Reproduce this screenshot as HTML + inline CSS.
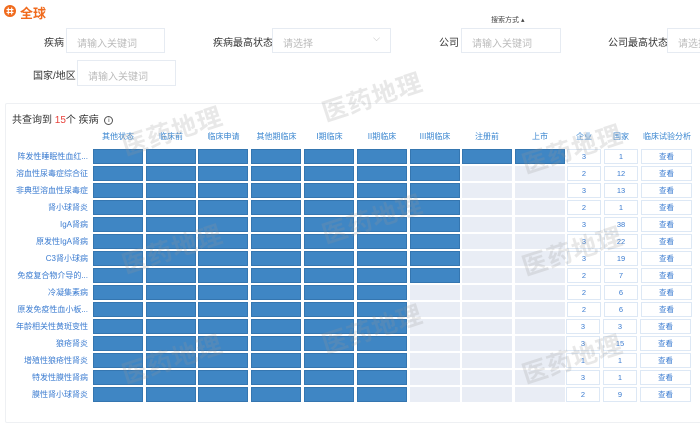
<!DOCTYPE html>
<html><head><meta charset="utf-8"><style>
*{margin:0;padding:0;box-sizing:border-box}
body{width:700px;height:414px;overflow:hidden;background:#fff;font-family:"Liberation Sans","Noto Sans CJK SC",sans-serif;position:relative;color:#333}
.a{position:absolute;white-space:nowrap}
.lbl{font-size:10px;color:#333}
.inp{position:absolute;border:1px solid #e6ebf2;height:25px;font-size:10px;color:#bbb;padding:6px 0 0 10px;background:#fff;white-space:nowrap;overflow:hidden}
.panel{position:absolute;left:5px;top:103px;width:700px;height:320px;border:1px solid #eef0f3;border-radius:2px}
.hd{position:absolute;top:131px;font-size:8px;color:#3a86d0;text-align:center}
.row{position:absolute;left:0;height:15px;width:700px}
.nm{position:absolute;left:0;width:88px;text-align:right;font-size:8px;color:#3a7bd0;line-height:15px;white-space:nowrap;overflow:hidden}
.c{position:absolute;top:0;height:15px;width:50px;background:#e9edf5}
.f{background:#3f86c4;border:1px solid #3576b0}
.n{position:absolute;top:0;height:15px;border:1px solid #dde8f5;background:#fff;font-size:7.5px;color:#3a7bd0;text-align:center;line-height:13px}
.wm{position:absolute;font-size:25px;font-weight:bold;color:rgba(150,150,150,.22);transform:rotate(-18deg);white-space:nowrap;letter-spacing:1px}
</style></head><body>
<div class="a" style="left:4px;top:5px;width:12px;height:12px;border-radius:50%;background:#f06a1c"></div>
<svg class="a" style="left:4px;top:5px" width="12" height="12" viewBox="0 0 12 12"><path d="M4.3 2.5V9.5M7.7 2.5V9.5M2.5 4.6H9.5M2.5 7.4H9.5" stroke="#fff" stroke-width="1.1" fill="none"/></svg>
<div class="a" style="left:20px;top:3px;font-size:13px;font-weight:bold;color:#f06a1c">全球</div>
<div class="a" style="left:491px;top:15px;font-size:7px;color:#444">搜索方式 ▴</div>

<div class="a lbl" style="left:44px;top:34px">疾病</div>
<div class="inp" style="left:66px;top:28px;width:99px">请输入关键词</div>
<div class="a lbl" style="left:213px;top:34px">疾病最高状态</div>
<div class="inp" style="left:272px;top:28px;width:119px">请选择<span style="position:absolute;right:10px;top:4px;color:#bbb;font-size:9px">⌵</span></div>
<div class="a lbl" style="left:439px;top:34px">公司</div>
<div class="inp" style="left:461px;top:28px;width:100px">请输入关键词</div>
<div class="a lbl" style="left:608px;top:34px">公司最高状态</div>
<div class="inp" style="left:667px;top:28px;width:40px">请选择</div>
<div class="a lbl" style="left:33px;top:67px">国家/地区</div>
<div class="inp" style="left:77px;top:60px;width:99px;height:26px;padding-top:7px">请输入关键词</div>

<div class="panel"></div>
<div class="a" style="left:12px;top:111px;font-size:10px;color:#333">共查询到 <span style="color:#e8413a">15</span>个 疾病 <span style="display:inline-block;width:9px;height:9px;border:1px solid #555;border-radius:50%;font-size:6px;text-align:center;line-height:8px;vertical-align:1px;margin-left:3px">i</span></div>

<div class="hd" style="left:93px;width:50px">其他状态</div>
<div class="hd" style="left:146px;width:50px">临床前</div>
<div class="hd" style="left:198px;width:51px">临床申请</div>
<div class="hd" style="left:251px;width:51px">其他期临床</div>
<div class="hd" style="left:304px;width:51px">I期临床</div>
<div class="hd" style="left:357px;width:50px">II期临床</div>
<div class="hd" style="left:410px;width:50px">III期临床</div>
<div class="hd" style="left:462px;width:50px">注册前</div>
<div class="hd" style="left:515px;width:50px">上市</div>
<div class="hd" style="left:567px;width:34px">企业</div>
<div class="hd" style="left:604px;width:34px">国家</div>
<div class="hd" style="left:638px;width:58px">临床试验分析</div>

<div class="row" style="top:149px"><div class="nm">阵发性睡眠性血红...</div><div class="c f" style="left:93px"></div><div class="c f" style="left:146px"></div><div class="c f" style="left:198px"></div><div class="c f" style="left:251px"></div><div class="c f" style="left:304px"></div><div class="c f" style="left:357px"></div><div class="c f" style="left:410px"></div><div class="c f" style="left:462px"></div><div class="c f" style="left:515px"></div><div class="n" style="left:567px;width:34px">3</div><div class="n" style="left:604px;width:34px">1</div><div class="n" style="left:641px;width:51px">查看</div></div>
<div class="row" style="top:166px"><div class="nm">溶血性尿毒症综合征</div><div class="c f" style="left:93px"></div><div class="c f" style="left:146px"></div><div class="c f" style="left:198px"></div><div class="c f" style="left:251px"></div><div class="c f" style="left:304px"></div><div class="c f" style="left:357px"></div><div class="c f" style="left:410px"></div><div class="c" style="left:462px"></div><div class="c" style="left:515px"></div><div class="n" style="left:567px;width:34px">2</div><div class="n" style="left:604px;width:34px">12</div><div class="n" style="left:641px;width:51px">查看</div></div>
<div class="row" style="top:183px"><div class="nm">非典型溶血性尿毒症</div><div class="c f" style="left:93px"></div><div class="c f" style="left:146px"></div><div class="c f" style="left:198px"></div><div class="c f" style="left:251px"></div><div class="c f" style="left:304px"></div><div class="c f" style="left:357px"></div><div class="c f" style="left:410px"></div><div class="c" style="left:462px"></div><div class="c" style="left:515px"></div><div class="n" style="left:567px;width:34px">3</div><div class="n" style="left:604px;width:34px">13</div><div class="n" style="left:641px;width:51px">查看</div></div>
<div class="row" style="top:200px"><div class="nm">肾小球肾炎</div><div class="c f" style="left:93px"></div><div class="c f" style="left:146px"></div><div class="c f" style="left:198px"></div><div class="c f" style="left:251px"></div><div class="c f" style="left:304px"></div><div class="c f" style="left:357px"></div><div class="c f" style="left:410px"></div><div class="c" style="left:462px"></div><div class="c" style="left:515px"></div><div class="n" style="left:567px;width:34px">2</div><div class="n" style="left:604px;width:34px">1</div><div class="n" style="left:641px;width:51px">查看</div></div>
<div class="row" style="top:217px"><div class="nm">IgA肾病</div><div class="c f" style="left:93px"></div><div class="c f" style="left:146px"></div><div class="c f" style="left:198px"></div><div class="c f" style="left:251px"></div><div class="c f" style="left:304px"></div><div class="c f" style="left:357px"></div><div class="c f" style="left:410px"></div><div class="c" style="left:462px"></div><div class="c" style="left:515px"></div><div class="n" style="left:567px;width:34px">3</div><div class="n" style="left:604px;width:34px">38</div><div class="n" style="left:641px;width:51px">查看</div></div>
<div class="row" style="top:234px"><div class="nm">原发性IgA肾病</div><div class="c f" style="left:93px"></div><div class="c f" style="left:146px"></div><div class="c f" style="left:198px"></div><div class="c f" style="left:251px"></div><div class="c f" style="left:304px"></div><div class="c f" style="left:357px"></div><div class="c f" style="left:410px"></div><div class="c" style="left:462px"></div><div class="c" style="left:515px"></div><div class="n" style="left:567px;width:34px">3</div><div class="n" style="left:604px;width:34px">22</div><div class="n" style="left:641px;width:51px">查看</div></div>
<div class="row" style="top:251px"><div class="nm">C3肾小球病</div><div class="c f" style="left:93px"></div><div class="c f" style="left:146px"></div><div class="c f" style="left:198px"></div><div class="c f" style="left:251px"></div><div class="c f" style="left:304px"></div><div class="c f" style="left:357px"></div><div class="c f" style="left:410px"></div><div class="c" style="left:462px"></div><div class="c" style="left:515px"></div><div class="n" style="left:567px;width:34px">3</div><div class="n" style="left:604px;width:34px">19</div><div class="n" style="left:641px;width:51px">查看</div></div>
<div class="row" style="top:268px"><div class="nm">免疫复合物介导的...</div><div class="c f" style="left:93px"></div><div class="c f" style="left:146px"></div><div class="c f" style="left:198px"></div><div class="c f" style="left:251px"></div><div class="c f" style="left:304px"></div><div class="c f" style="left:357px"></div><div class="c f" style="left:410px"></div><div class="c" style="left:462px"></div><div class="c" style="left:515px"></div><div class="n" style="left:567px;width:34px">2</div><div class="n" style="left:604px;width:34px">7</div><div class="n" style="left:641px;width:51px">查看</div></div>
<div class="row" style="top:285px"><div class="nm">冷凝集素病</div><div class="c f" style="left:93px"></div><div class="c f" style="left:146px"></div><div class="c f" style="left:198px"></div><div class="c f" style="left:251px"></div><div class="c f" style="left:304px"></div><div class="c f" style="left:357px"></div><div class="c" style="left:410px"></div><div class="c" style="left:462px"></div><div class="c" style="left:515px"></div><div class="n" style="left:567px;width:34px">2</div><div class="n" style="left:604px;width:34px">6</div><div class="n" style="left:641px;width:51px">查看</div></div>
<div class="row" style="top:302px"><div class="nm">原发免疫性血小板...</div><div class="c f" style="left:93px"></div><div class="c f" style="left:146px"></div><div class="c f" style="left:198px"></div><div class="c f" style="left:251px"></div><div class="c f" style="left:304px"></div><div class="c f" style="left:357px"></div><div class="c" style="left:410px"></div><div class="c" style="left:462px"></div><div class="c" style="left:515px"></div><div class="n" style="left:567px;width:34px">2</div><div class="n" style="left:604px;width:34px">6</div><div class="n" style="left:641px;width:51px">查看</div></div>
<div class="row" style="top:319px"><div class="nm">年龄相关性黄斑变性</div><div class="c f" style="left:93px"></div><div class="c f" style="left:146px"></div><div class="c f" style="left:198px"></div><div class="c f" style="left:251px"></div><div class="c f" style="left:304px"></div><div class="c f" style="left:357px"></div><div class="c" style="left:410px"></div><div class="c" style="left:462px"></div><div class="c" style="left:515px"></div><div class="n" style="left:566px;width:34px">3</div><div class="n" style="left:603px;width:34px">3</div><div class="n" style="left:640px;width:51px">查看</div></div>
<div class="row" style="top:336px"><div class="nm">狼疮肾炎</div><div class="c f" style="left:93px"></div><div class="c f" style="left:146px"></div><div class="c f" style="left:198px"></div><div class="c f" style="left:251px"></div><div class="c f" style="left:304px"></div><div class="c f" style="left:357px"></div><div class="c" style="left:410px"></div><div class="c" style="left:462px"></div><div class="c" style="left:515px"></div><div class="n" style="left:566px;width:34px">3</div><div class="n" style="left:603px;width:34px">15</div><div class="n" style="left:640px;width:51px">查看</div></div>
<div class="row" style="top:353px"><div class="nm">增殖性狼疮性肾炎</div><div class="c f" style="left:93px"></div><div class="c f" style="left:146px"></div><div class="c f" style="left:198px"></div><div class="c f" style="left:251px"></div><div class="c f" style="left:304px"></div><div class="c f" style="left:357px"></div><div class="c" style="left:410px"></div><div class="c" style="left:462px"></div><div class="c" style="left:515px"></div><div class="n" style="left:566px;width:34px">1</div><div class="n" style="left:603px;width:34px">1</div><div class="n" style="left:640px;width:51px">查看</div></div>
<div class="row" style="top:370px"><div class="nm">特发性膜性肾病</div><div class="c f" style="left:93px"></div><div class="c f" style="left:146px"></div><div class="c f" style="left:198px"></div><div class="c f" style="left:251px"></div><div class="c f" style="left:304px"></div><div class="c f" style="left:357px"></div><div class="c" style="left:410px"></div><div class="c" style="left:462px"></div><div class="c" style="left:515px"></div><div class="n" style="left:566px;width:34px">3</div><div class="n" style="left:603px;width:34px">1</div><div class="n" style="left:640px;width:51px">查看</div></div>
<div class="row" style="top:387px"><div class="nm">膜性肾小球肾炎</div><div class="c f" style="left:93px"></div><div class="c f" style="left:146px"></div><div class="c f" style="left:198px"></div><div class="c f" style="left:251px"></div><div class="c f" style="left:304px"></div><div class="c f" style="left:357px"></div><div class="c" style="left:410px"></div><div class="c" style="left:462px"></div><div class="c" style="left:515px"></div><div class="n" style="left:566px;width:34px">2</div><div class="n" style="left:603px;width:34px">9</div><div class="n" style="left:640px;width:51px">查看</div></div>

<div class="wm" style="left:120px;top:112px">医药地理</div>
<div class="wm" style="left:320px;top:78px">医药地理</div>
<div class="wm" style="left:520px;top:130px">医药地理</div>
<div class="wm" style="left:120px;top:230px">医药地理</div>
<div class="wm" style="left:320px;top:200px">医药地理</div>
<div class="wm" style="left:520px;top:232px">医药地理</div>
<div class="wm" style="left:120px;top:340px">医药地理</div>
<div class="wm" style="left:320px;top:310px">医药地理</div>
<div class="wm" style="left:520px;top:340px">医药地理</div>
</body></html>
